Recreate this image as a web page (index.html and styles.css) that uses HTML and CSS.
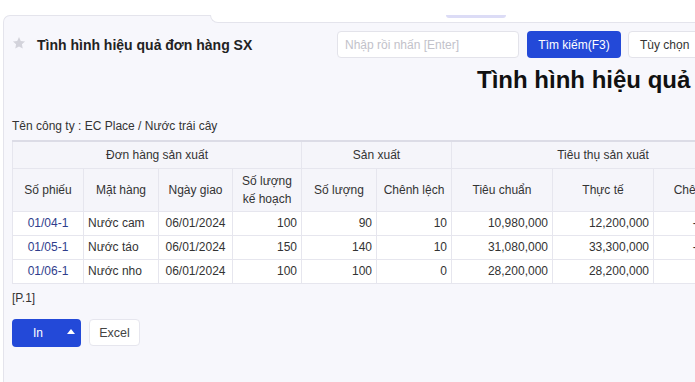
FILE: index.html
```html
<!DOCTYPE html>
<html lang="vi">
<head>
<meta charset="utf-8">
<link rel="stylesheet" href="styles.css">
</head>
<body>
<div class="page">
  <div class="tabrow">
    <div class="tab-rest"><span class="pill"></span></div>
  </div>
  <div class="panel">
    <div class="head">
      <div class="head-title">
        <svg class="star" width="14" height="14" viewBox="0 0 24 24"><path d="M12 1.8l3.1 6.6 7.2.9-5.3 5 1.4 7.1L12 17.9l-6.4 3.5 1.4-7.1-5.3-5 7.2-.9z" fill="#d3d3db"/></svg>
        <span class="title">Tình hình hiệu quả đơn hàng SX</span>
      </div>
      <div class="controls">
        <input class="search" type="text" placeholder="Nhập rồi nhấn [Enter]">
        <button class="btn btn-primary">Tìm kiếm(F3)</button>
        <button class="btn btn-light">Tùy chọn</button>
      </div>
    </div>
    <h1 class="report-title">Tình hình hiệu quả đơn hàng sản xuất</h1>
    <div class="company">Tên công ty : EC Place / Nước trái cây</div>
    <table class="grid">
      <colgroup>
        <col class="w71"><col class="w75"><col class="w74"><col class="w69"><col class="w75"><col class="w75"><col class="w101"><col class="w101"><col class="w101">
      </colgroup>
      <thead>
        <tr class="h1">
          <th colspan="4">Đơn hàng sản xuất</th>
          <th colspan="2">Sản xuất</th>
          <th colspan="3">Tiêu thụ sản xuất</th>
        </tr>
        <tr class="h2">
          <th>Số phiếu</th>
          <th>Mặt hàng</th>
          <th>Ngày giao</th>
          <th>Số lượng<br>kế hoạch</th>
          <th>Số lượng</th>
          <th>Chênh lệch</th>
          <th>Tiêu chuẩn</th>
          <th>Thực tế</th>
          <th>Chênh lệch</th>
        </tr>
      </thead>
      <tbody>
        <tr>
          <td class="c link">01/04-1</td><td class="l">Nước cam</td><td class="c">06/01/2024</td><td class="r">100</td><td class="r">90</td><td class="r">10</td><td class="r">10,980,000</td><td class="r">12,200,000</td><td class="r">-1,220,000</td>
        </tr>
        <tr>
          <td class="c link">01/05-1</td><td class="l">Nước táo</td><td class="c">06/01/2024</td><td class="r">150</td><td class="r">140</td><td class="r">10</td><td class="r">31,080,000</td><td class="r">33,300,000</td><td class="r">-2,220,000</td>
        </tr>
        <tr>
          <td class="c link">01/06-1</td><td class="l">Nước nho</td><td class="c">06/01/2024</td><td class="r">100</td><td class="r">100</td><td class="r">0</td><td class="r">28,200,000</td><td class="r">28,200,000</td><td class="r">0</td>
        </tr>
      </tbody>
    </table>
    <div class="pageno">[P.1]</div>
    <div class="actions">
      <button class="btn-print"><span>In</span><svg width="8" height="5" viewBox="0 0 8 5"><path d="M4 0L8 5H0z" fill="#fff"/></svg></button>
      <button class="btn-excel">Excel</button>
    </div>
  </div>
</div>
</body>
</html>
```

FILE: styles.css
```css
html, body {
  margin: 0;
  padding: 0;
  background: #ffffff;
  overflow: hidden;
  width: 695px;
  height: 382px;
}
body {
  font-family: "Liberation Sans", Arial, sans-serif;
  color: #333;
}
.page {
  padding-top: 15px;
  height: 367px;
}
.tabrow {
  margin-left: 3px;
  height: 7px;
  display: flex;
  background: #f7f7fc;
  border-top: 1px solid #e4e4ec;
  border-left: 1px solid #e4e4ec;
  border-top-left-radius: 9px;
  box-sizing: border-box;
}
.tab-rest {
  position: relative;
  margin-left: 206px;
  margin-top: -1px;
  flex: 1;
  height: 7px;
  background: #ffffff;
  border-bottom: 1px solid #e4e4ec;
  border-left: 1px solid #e4e4ec;
  border-bottom-left-radius: 8px;
}
.pill {
  position: absolute;
  left: 235px;
  top: 0;
  width: 60px;
  height: 3px;
  background: #dcdcf6;
  border-radius: 0 0 4px 4px;
}
.panel {
  margin-left: 3px;
  border-left: 1px solid #e4e4ec;
  background: #f7f7fc;
  height: 360px;
  padding: 9px 0 0 8px;
  box-sizing: border-box;
  width: 900px;
}
.head {
  display: flex;
  align-items: center;
  height: 27px;
}
.head-title {
  width: 325px;
  display: flex;
  align-items: center;
}
.star {
  margin-left: 0;
  margin-right: 11px;
  margin-top: -3px;
}
.title {
  font-size: 14px;
  font-weight: bold;
  color: #222;
}
.controls {
  display: flex;
  align-items: center;
  gap: 8px;
}
.search {
  width: 182px;
  height: 27px;
  box-sizing: border-box;
  border: 1px solid #e3e3ea;
  border-radius: 4px;
  background: #fff;
  padding: 0 7px;
  font-family: "Liberation Sans", Arial, sans-serif;
  font-size: 12px;
  outline: none;
}
.search::placeholder {
  color: #c2c2ca;
}
.btn {
  height: 27px;
  border-radius: 4px;
  font-family: "Liberation Sans", Arial, sans-serif;
  font-size: 12px;
  padding: 0;
  box-sizing: border-box;
}
.btn-primary {
  width: 94px;
  background: #2349d8;
  color: #fff;
  border: none;
}
.btn-light {
  width: 80px;
  margin-left: -1px;
  background: #fff;
  color: #333;
  border: 1px solid #e3e3ea;
  text-align: left;
  padding-left: 11px;
}
.report-title {
  margin: 7px 0 0 0;
  padding-left: 465px;
  font-size: 24px;
  line-height: 29px;
  font-weight: bold;
  color: #111;
  white-space: nowrap;
}
.company {
  margin-top: 24px;
  font-size: 12px;
  line-height: 16px;
  color: #333;
}
.grid {
  margin-top: 6px;
  border-collapse: collapse;
  table-layout: fixed;
  width: 742px;
  font-size: 12px;
}
.w71 { width: 71px; }
.w75 { width: 75px; }
.w74 { width: 74px; }
.w69 { width: 69px; }
.w101 { width: 101px; }
.grid th, .grid td {
  border: 1px solid #e6e6ee;
  padding: 0 4px;
  white-space: nowrap;
  overflow: hidden;
}
.grid thead tr.h1 th {
  border-top: 2px solid #dcdce6;
}
.grid th {
  background: #f5f5fa;
  font-weight: normal;
  color: #333;
  text-align: center;
  line-height: 18px;
}
.grid tr.h1 { height: 27px; }
.grid tr.h2 { height: 43px; }
.grid tbody tr { height: 24px; }
.grid td {
  background: #fff;
  color: #333;
}
.grid td.c { text-align: center; }
.grid td.l { text-align: left; }
.grid td.r { text-align: right; }
.grid td.link { color: #2f3d8c; }
.pageno {
  margin-top: 6px;
  font-size: 12px;
  line-height: 16px;
  color: #333;
}
.actions {
  margin-top: 13px;
  display: flex;
  align-items: center;
  gap: 8px;
}
.btn-print {
  width: 69px;
  height: 28px;
  background: #2349d8;
  border: none;
  border-radius: 4px;
  color: #fff;
  font-family: "Liberation Sans", Arial, sans-serif;
  font-size: 12px;
  display: flex;
  align-items: center;
  justify-content: space-between;
  padding: 0 6px 0 21px;
  box-sizing: border-box;
}
.btn-print svg {
  margin-top: -2px;
}
.btn-excel {
  width: 51px;
  height: 27px;
  background: #fff;
  border: 1px solid #e6e6ee;
  border-radius: 4px;
  color: #444;
  font-family: "Liberation Sans", Arial, sans-serif;
  font-size: 12.5px;
  padding: 0;
  box-sizing: border-box;
}
```
